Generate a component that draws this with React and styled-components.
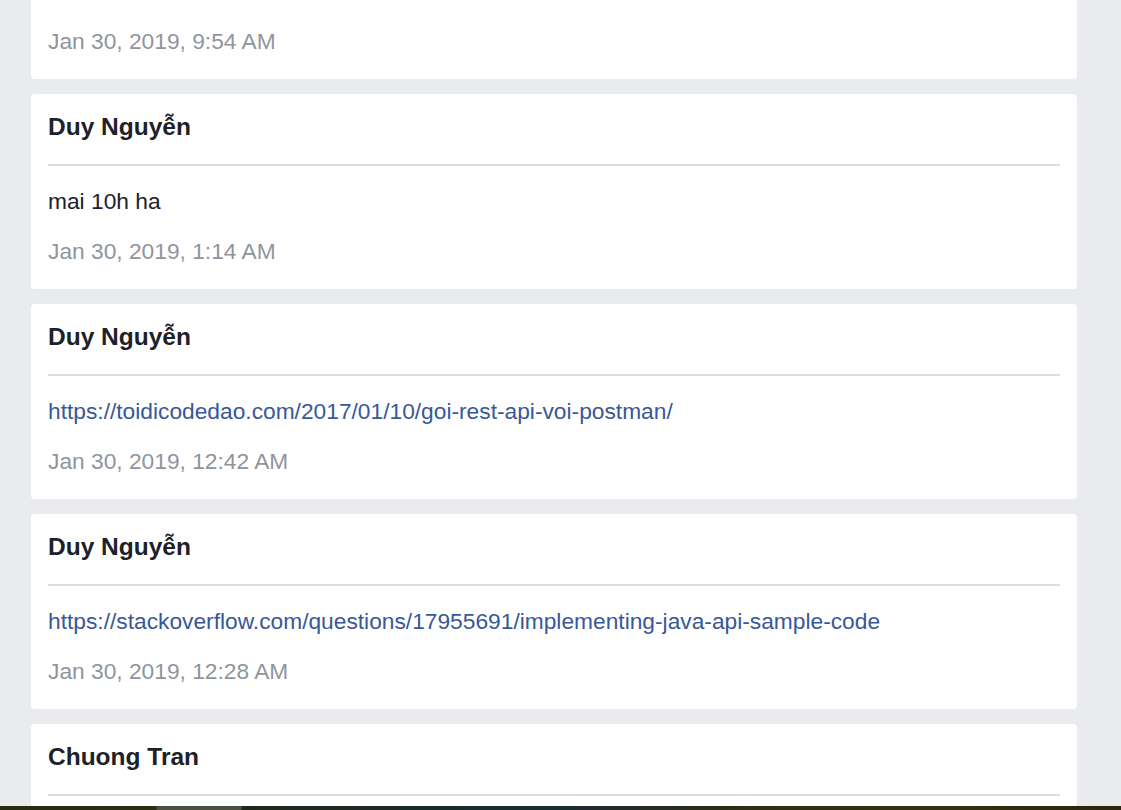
import React, { useLayoutEffect, useRef } from "react";
import styled, { createGlobalStyle } from "styled-components";

const GlobalStyle = createGlobalStyle`
  html, body {
    margin: 0;
    padding: 0;
    height: 100%;
    overflow: hidden;
    background: #e9ebee;
    font-family: "Liberation Sans", Arial, Helvetica, sans-serif;
  }
  #root { height: 100%; }
`;

const Viewport = styled.div`
  height: 100vh;
  overflow-y: auto;
  scrollbar-width: none;
  &::-webkit-scrollbar { display: none; }
`;

const Feed = styled.div`
  display: grid;
  grid-template-columns: 1046px;
  row-gap: 15px;
  padding: 15px 44px 40px 31px;
`;

const Card = styled.article`
  background: #ffffff;
  border-radius: 4px;
  padding: 19px 17px 23px;
  display: flex;
  flex-direction: column;
  height: 195px;
  box-sizing: border-box;
`;

const Author = styled.h3`
  margin: 0;
  font-size: 24.5px;
  line-height: 28px;
  font-weight: 700;
  color: #1d2129;
  white-space: nowrap;
`;

const Divider = styled.hr`
  margin: 23px 0 0;
  border: 0;
  height: 2px;
  background: #dadde1;
`;

const Message = styled.p`
  margin: 22px 0 0;
  font-size: 22.75px;
  line-height: 27px;
  color: #1d2129;
  white-space: nowrap;
`;

const Link = styled.a`
  color: #385898;
  text-decoration: none;
`;

const Time = styled.time`
  display: block;
  margin-top: 23px;
  font-size: 22.75px;
  line-height: 27px;
  color: #90949c;
  white-space: nowrap;
`;

const BottomStrip = styled.div`
  position: fixed;
  left: 0;
  right: 0;
  bottom: 0;
  height: 4px;
  background: linear-gradient(
    90deg,
    #262b12 0px,
    #2a2f14 156px,
    #4b5141 157px,
    #4b5141 241px,
    #1e2a18 242px,
    #1a2a2c 450px,
    #1c2b33 560px,
    #2f2e14 760px,
    #352f0e 950px,
    #2c2410 1121px
  );
`;

const messages = [
  { author: "Chuong Tran", text: "ok", time: "Jan 30, 2019, 9:54 AM" },
  { author: "Duy Nguyễn", text: "mai 10h ha", time: "Jan 30, 2019, 1:14 AM" },
  {
    author: "Duy Nguyễn",
    link: "https://toidicodedao.com/2017/01/10/goi-rest-api-voi-postman/",
    time: "Jan 30, 2019, 12:42 AM",
  },
  {
    author: "Duy Nguyễn",
    link: "https://stackoverflow.com/questions/17955691/implementing-java-api-sample-code",
    time: "Jan 30, 2019, 12:28 AM",
  },
  { author: "Chuong Tran", text: "ok anh", time: "Jan 29, 2019, 11:50 PM" },
];

export default function App() {
  const ref = useRef(null);
  useLayoutEffect(() => {
    if (ref.current) ref.current.scrollTop = 131;
  }, []);
  return (
    <>
      <GlobalStyle />
      <Viewport ref={ref}>
        <Feed>
          {messages.map((m, i) => (
            <Card key={i}>
              <Author>{m.author}</Author>
              <Divider />
              <Message>
                {m.link ? <Link href={m.link}>{m.link}</Link> : m.text}
              </Message>
              <Time>{m.time}</Time>
            </Card>
          ))}
        </Feed>
      </Viewport>
      <BottomStrip />
    </>
  );
}
